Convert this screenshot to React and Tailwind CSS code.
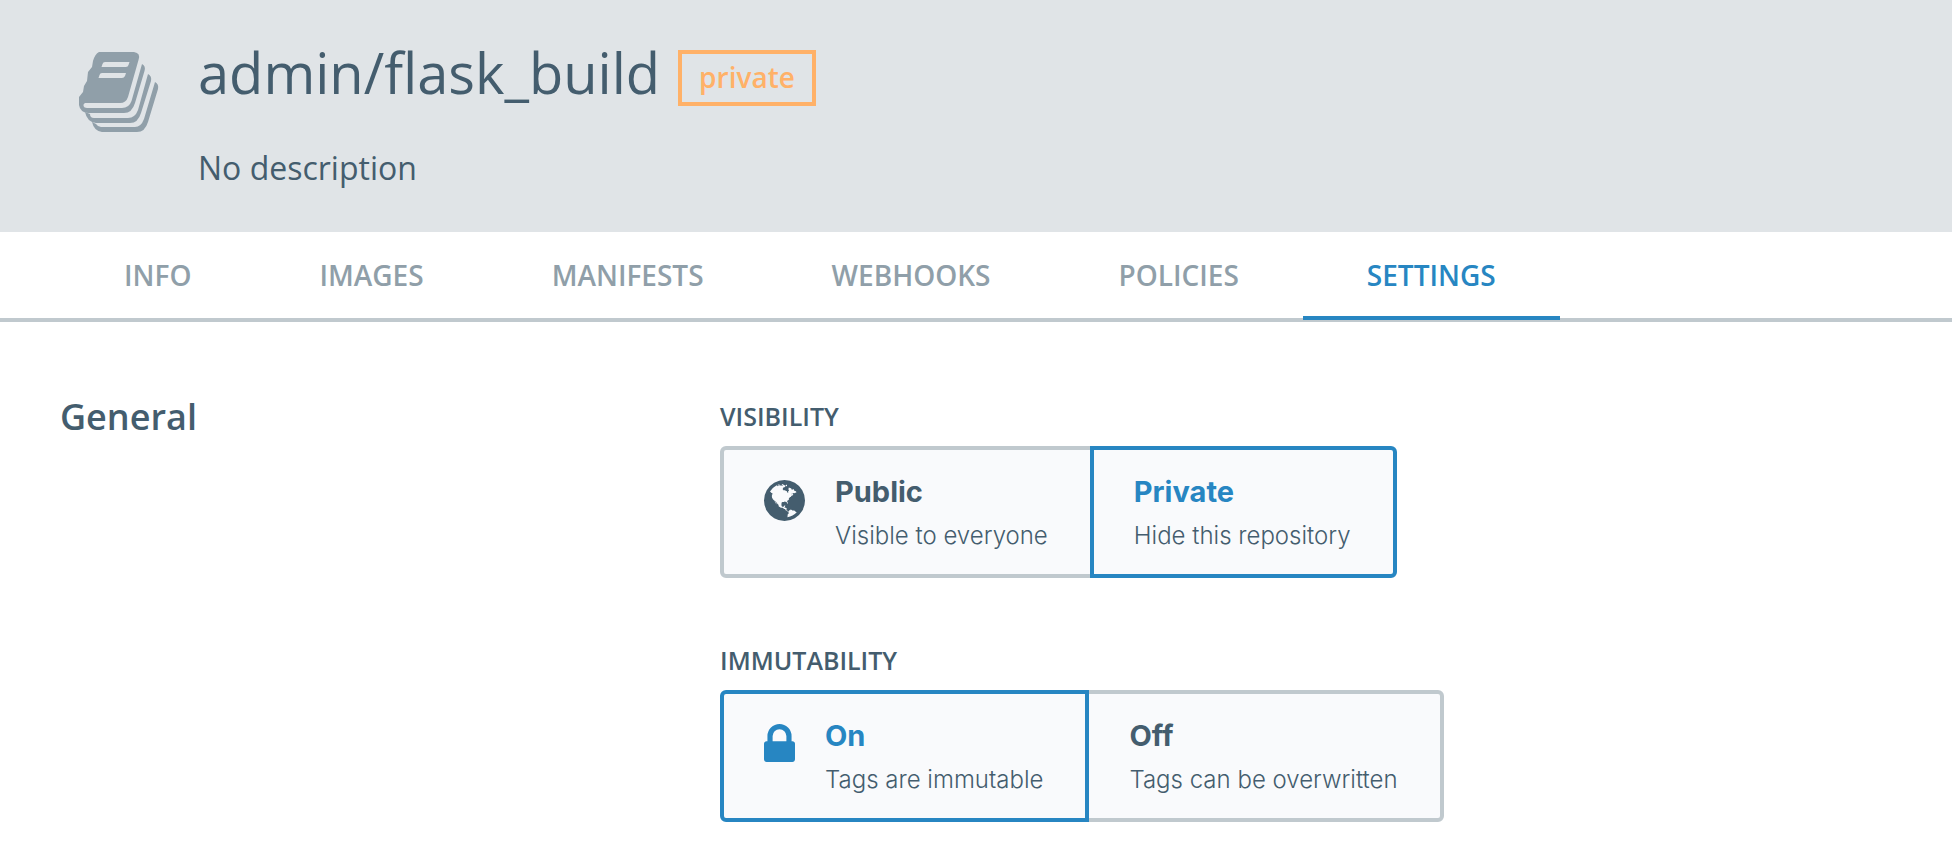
const globePath =
  "M768 128q209 0 385.5 103t279.5 279.5 103 385.5-103 385.5-279.5 279.5-385.5 103-385.5-103-279.5-279.5-103-385.5 103-385.5 279.5-279.5 385.5-103zm274 521q-2 1-9.5 9.5t-13.5 9.5q2 0 4.5-5t5-11 3.5-7q6-7 22-15 14-6 52-12 34-8 51 11-2-2 9.5-13t14.5-12q3-2 15-4.5t15-7.5l2-22q-12 1-17.5-7t-6.5-21q0 2-6 8 0-7-4.5-8t-11.5 1-9 1q-10-3-15-7.5t-8-16.5-4-15q-2-5-9.5-10.5t-9.5-10.5q-1-2-2.5-5.5t-3-6.5-4-5.5-5.5-2.5-7 5-7.5 10-4.5 5q-3-2-6-1.5t-4.5 1-4.5 3-5 3.5q-3 2-8.5 3t-8.5 2q15-5-1-11-10-4-16-3 9-4 7.5-12t-8.5-14h5q-1-4-8.5-8.5t-17.5-8.5-13-6q-8-5-34-9.5t-33-.5q-5 6-4.5 10.5t4 14 3.5 12.5q1 6-5.5 13t-6.5 12q0 7 14 15.5t10 21.5q-3 8-16 16t-16 12q-5 8-1.5 18.5t10.5 16.5q2 2 1.5 4t-3.5 4.5-5.5 4-6.5 3.5l-3 2q-11 5-20.5-6t-13.5-26q-7-25-16-30-23-8-29 1-5-13-41-26-25-9-58-4 6-1 0-15-7-15-19-12 3-6 4-17.5t1-13.5q3-13 12-23 1-1 7-8.5t9.5-13.5.5-6q35 4 50-11 5-5 11.5-17t10.5-17q9-6 14-5.5t14.5 5.5 14.5 5q14 1 15.5-11t-7.5-20q12 1 3-17-4-7-8-9-12-4-27 5-8 4 2 8-1-1-9.5 10.5t-16.5 17.5-16-5q-1-1-5.5-13.5t-9.5-13.5q-8 0-16 15 3-8-11-15t-24-8q19-12-8-27-7-4-20.5-5t-19.5 4q-5 7-5.5 11.5t5 8 10.5 5.5 11.5 4 8.5 3q14 10 8 14-2 1-8.5 3.5t-11.5 4.5-6 4q-3 4 0 14t-2 14q-5-5-9-17.5t-7-16.5q7 9-25 6l-10-1q-4 0-16 2t-20.5 1-13.5-8q-4-8 0-20 1-4 4-2-4-3-11-9.5t-10-8.5q-46 15-94 41 6 1 12-1 5-2 13-6.5t10-5.5q34-14 42-7l5-5q14 16 20 25-7-4-30-1-20 6-22 12 7 12 5 18-4-3-11.5-10t-14.5-11-15-5q-16 0-22 1-146 80-235 222 7 7 12 8 4 1 5 9t2.5 11 11.5-3q9 8 3 19 1-1 44 27 19 17 21 21 3 11-10 18-1-2-9-9t-9-4q-3 5 .5 18.5t10.5 12.5q-7 0-9.5 16t-2.5 35.5-1 23.5l2 1q-3 12 5.5 34.5t21.5 19.5q-13 3 20 43 6 8 8 9 3 2 12 7.5t15 10 10 10.5q4 5 10 22.5t14 23.5q-2 6 9.5 20t10.5 23q-1 0-2.5 1t-2.5 1q3 7 15.5 14t15.5 13q1 3 2 10t3 11 8 2q2-20-24-62-15-25-17-29-3-5-5.5-15.5t-4.5-14.5q2 0 6 1.5t8.5 3.5 7.5 4 2 3q-3 7 2 17.5t12 18.5 17 19 12 13q6 6 14 19.5t0 13.5q9 0 20 10t17 20q5 8 8 26t5 24q2 7 8.5 13.5t12.5 9.5l16 8 13 7q5 2 18.5 10.5t21.5 11.5q10 4 16 4t14.5-2.5 13.5-3.5q15-2 29 15t21 21q36 19 55 11-2 1 .5 7.5t8 15.5 9 14.5 5.5 8.5q5 6 18 15t18 15q6-4 7-9-3 8 7 20t18 10q14-3 14-32-31 15-49-18 0-1-2.5-5.5t-4-8.5-2.5-8.5 0-7.5 5-3q9 0 10-3.5t-2-12.5-4-13q-1-8-11-20t-12-15q-5 9-16 8t-16-9q0 1-1.5 5.5t-1.5 6.5q-13 0-15-1 1-3 2.5-17.5t3.5-22.5q1-4 5.5-12t7.5-14.5 4-12.5-4.5-9.5-17.5-2.5q-19 1-26 20-1 3-3 10.5t-5 11.5-9 7q-7 3-24 2t-24-5q-13-8-22.5-29t-9.5-37q0-10 2.5-26.5t3-25-5.5-24.5q3-2 9-9.5t10-10.5q2-1 4.5-1.5t4.5 0 4-1.5 3-6q-1-1-4-3-3-3-4-3 7 3 28.5-1.5t27.5 1.5q15 11 22-2 0-1-2.5-9.5t-.5-13.5q5 27 29 9 3 3 15.5 5t17.5 5q3 2 7 5.5t5.5 4.5 5-.5 8.5-6.5q10 14 12 24 11 40 19 44 7 3 11 2t4.5-9.5 0-14-1.5-12.5l-1-8v-18l-1-8q-15-3-18.5-12t1.5-18.5 15-18.5q1-1 8-3.5t15.5-6.5 12.5-8q21-19 15-35 7 0 11-9-1 0-5-3t-7.5-5-4.5-2q9-5 2-16 5-3 7.5-11t7.5-10q9 12 21 2 7-8 1-16 5-7 20.5-10.5t18.5-9.5q7 2 8-2t1-12 3-12q4-5 15-9t13-5l17-11q3-4 0-4 18 2 31-11 10-11-6-20 3-6-3-9.5t-15-5.5q3-1 11.5-.5t10.5-1.5q15-10-7-16-17-5-43 12zm-163 877q206-36 351-189-3-3-12.5-4.5t-12.5-3.5q-18-7-24-8 1-7-2.5-13t-8-9-12.5-8-11-7q-2-2-7-6t-7-5.5-7.5-4.5-8.5-2-10 1l-3 1q-3 1-5.5 2.5t-5.5 3-4 3 0 2.5q-21-17-36-22-5-1-11-5.5t-10.5-7-10-1.5-11.5 7q-5 5-6 15t-2 13q-7-5 0-17.5t2-18.5q-3-6-10.5-4.5t-12 4.5-11.5 8.5-9 6.5-8.5 5.5-8.5 7.5q-3 4-6 12t-5 11q-2-4-11.5-6.5t-9.5-5.5q2 10 4 35t5 38q7 31-12 48-27 25-29 40-4 22 12 26 0 7-8 20.5t-7 21.5q0 6 2 16z";

function GlobeIcon() {
  return (
    <svg aria-hidden="true" viewBox="0 128 1536 1536" className="size-[41px]" fill="currentColor">
      <path d={globePath} />
    </svg>
  );
}

function LockIcon() {
  return (
    <svg aria-hidden="true" viewBox="0 0 1152 1408" className="h-[38px] w-[31px]" fill="currentColor">
      <path d="M320 640h512V448q0-106-75-181t-181-75-181 75-75 181v192zm832 96v576q0 40-28 68t-68 28H96q-40 0-68-28t-28-68V736q0-40 28-68t68-28h32V448q0-184 132-316T576 0t316 132 132 316v192h32q40 0 68 28t28 68z" />
    </svg>
  );
}

function BooksIcon() {
  return (
    <svg aria-hidden="true" viewBox="0 0 80 80" className="mt-[52px] size-20 shrink-0" fill="none">
      <path
        fill="currentColor"
        fillRule="evenodd"
        d="M20 0H55Q62 1 59.500 8L49 45Q47 51 41 51H6Q4 52 4.500 54Q5 56 8 56H43Q50 56 52.500 49L63 12Q67 14 65.500 19L56 51Q53 61 45 61H9Q1 60 0 53V45L4 40L5 34L8 29L9 20L13 15L14 9Q16 2 20 0ZM26 10Q24 10 23.500 12L22.500 15H47Q49 15 49.500 13L50.500 10ZM23 21Q21 21 20.500 23L19.500 26H43Q45 26 46 24L47 21Z"
      />
      <path
        fill="currentColor"
        d="M6 60L11 62Q11 66 15 66H49Q56 66 59 58L69 22Q73 24 72 29L62 61Q59 71 51 71H17Q8 70 6 60ZM13 70L17 72Q19 75 22 75H56Q62 75 65 67L76 30Q80 32 79 37L69 70Q66 80 58 80H23Q15 79 13 70Z"
      />
    </svg>
  );
}

const tabs = ["INFO", "IMAGES", "MANIFESTS", "WEBHOOKS", "POLICIES", "SETTINGS"];

function Option({ title, text, icon, selected, first }) {
  return (
    <button
      type="button"
      aria-pressed={selected}
      className={[
        "flex items-start gap-[30px] border-4 bg-[#f9fafc] pt-6 pr-[42px] pb-[22px] pl-10 text-left",
        first ? "-mr-1 rounded-l-md" : "rounded-r-md",
        selected ? "relative z-10 border-[#2786c2]" : "border-[#c0c9ce]",
      ].join(" ")}
    >
      {icon && <span className={selected ? "mt-1.5 text-[#2786c2]" : "mt-1.5 text-[#445d6e]"}>{icon}</span>}
      <span className="flex flex-col gap-2.5">
        <span className={selected ? "text-[29px] leading-9 font-bold text-[#2786c2]" : "text-[29px] leading-9 font-bold text-[#445d6e]"}>
          {title}
        </span>
        <span className="text-2xl font-light text-[#445d6e]">{text}</span>
      </span>
    </button>
  );
}

function Field({ label, children }) {
  return (
    <section className="flex flex-col gap-3.5" aria-label={label}>
      <h3 className="text-[25px] leading-8 font-semibold">{label}</h3>
      <div className="flex font-['Inter',sans-serif]">{children}</div>
    </section>
  );
}

export default function App() {
  return (
    <div className="bg-white font-['Open_Sans',sans-serif] text-[#445d6e]">
      <header className="flex gap-[39px] bg-[#e0e4e7] pb-[42px] pl-[79px] text-[#445d6e]">
        <span className="text-[#909fa9]">
          <BooksIcon />
        </span>
        <div className="pt-8">
          <div className="flex items-start gap-[18px]">
            <h1 className="text-[56px] leading-20">admin/flask_build</h1>
            <span className="mt-[18px] border-4 border-[#ffb168] px-[17px] pt-[3px] pb-[5px] text-[28px] leading-10 font-semibold text-[#ffb168]">private</span>
          </div>
          <p className="mt-[34px] text-[32px] leading-11">No description</p>
        </div>
      </header>
      <nav className="flex border-b-4 border-[#c0c9ce] pl-[60px]">
        {tabs.map((tab) => (
          <a
            key={tab}
            href={"#" + tab.toLowerCase()}
            className={
              tab === "SETTINGS"
                ? "-mb-0.5 border-b-4 border-[#2786c2] px-16 pt-[23px] pb-[21px] text-[28px] leading-10 font-semibold text-[#2786c2]"
                : "px-16 pt-[23px] pb-[23px] text-[28px] leading-10 font-semibold text-[#909fa9]"
            }
          >
            {tab}
          </a>
        ))}
      </nav>
      <main className="flex px-[60px] pt-[71px] pb-11">
        <h2 className="w-[660px] shrink-0 text-4xl leading-12 font-semibold">General</h2>
        <div className="flex flex-col gap-[66px] pt-[7px]">
          <Field label="VISIBILITY">
            <Option first title="Public" text="Visible to everyone" icon={<GlobeIcon />} />
            <Option selected title="Private" text="Hide this repository" />
          </Field>
          <Field label="IMMUTABILITY">
            <Option first selected title="On" text="Tags are immutable" icon={<LockIcon />} />
            <Option title="Off" text="Tags can be overwritten" />
          </Field>
        </div>
      </main>
    </div>
  );
}
